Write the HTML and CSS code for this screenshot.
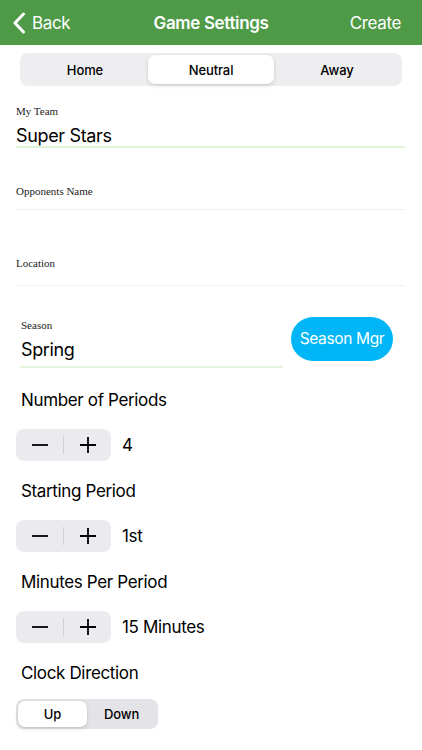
FILE: index.html
```html
<!DOCTYPE html>
<html>
<head>
<meta charset="utf-8">
<link rel="stylesheet" href="styles.css">
</head>
<body>
<header class="nav">
  <div class="nav-back">
    <svg width="14" height="22" viewBox="0 0 14 22"><path d="M11.5 2 L3 11 L11.5 20" fill="none" stroke="#fff" stroke-width="3" stroke-linecap="round" stroke-linejoin="round"/></svg>
    <span>Back</span>
  </div>
  <div class="nav-title">Game Settings</div>
  <div class="nav-action">Create</div>
</header>

<div class="seg-wrap">
  <div class="seg seg-wide">
    <div class="seg-item">Home</div>
    <div class="seg-item selected">Neutral</div>
    <div class="seg-item">Away</div>
  </div>
</div>

<div class="field f-team">
  <div class="f-label">My Team</div>
  <div class="f-value">Super Stars</div>
  <div class="f-line strong"></div>
</div>

<div class="field f-opp">
  <div class="f-label">Opponents Name</div>
  <div class="f-value empty"></div>
  <div class="f-line"></div>
</div>

<div class="field f-loc">
  <div class="f-label">Location</div>
  <div class="f-value empty"></div>
  <div class="f-line"></div>
</div>

<div class="season-row">
  <div class="field season">
    <div class="f-label">Season</div>
    <div class="f-value">Spring</div>
    <div class="f-line"></div>
  </div>
  <div class="season-btn">Season Mgr</div>
</div>

<div class="setting first">
  <div class="s-title">Number of Periods</div>
  <div class="s-row">
    <div class="stepper">
      <div class="st-btn"><svg width="16" height="16" viewBox="0 0 16 16"><path d="M0 8 H16" stroke="#000" stroke-width="1.8"/></svg></div>
      <div class="st-div"></div>
      <div class="st-btn"><svg width="16" height="16" viewBox="0 0 16 16"><path d="M0 8 H16 M8 0 V16" stroke="#000" stroke-width="1.8"/></svg></div>
    </div>
    <div class="s-value">4</div>
  </div>
</div>

<div class="setting">
  <div class="s-title">Starting Period</div>
  <div class="s-row">
    <div class="stepper">
      <div class="st-btn"><svg width="16" height="16" viewBox="0 0 16 16"><path d="M0 8 H16" stroke="#000" stroke-width="1.8"/></svg></div>
      <div class="st-div"></div>
      <div class="st-btn"><svg width="16" height="16" viewBox="0 0 16 16"><path d="M0 8 H16 M8 0 V16" stroke="#000" stroke-width="1.8"/></svg></div>
    </div>
    <div class="s-value">1st</div>
  </div>
</div>

<div class="setting">
  <div class="s-title">Minutes Per Period</div>
  <div class="s-row">
    <div class="stepper">
      <div class="st-btn"><svg width="16" height="16" viewBox="0 0 16 16"><path d="M0 8 H16" stroke="#000" stroke-width="1.8"/></svg></div>
      <div class="st-div"></div>
      <div class="st-btn"><svg width="16" height="16" viewBox="0 0 16 16"><path d="M0 8 H16 M8 0 V16" stroke="#000" stroke-width="1.8"/></svg></div>
    </div>
    <div class="s-value">15 Minutes</div>
  </div>
</div>

<div class="setting">
  <div class="s-title">Clock Direction</div>
  <div class="s-row clock">
    <div class="seg seg-small">
      <div class="seg-item selected">Up</div>
      <div class="seg-item">Down</div>
    </div>
  </div>
</div>
</body>
</html>
```

FILE: styles.css
```css
* { box-sizing: border-box; }
html, body { margin: 0; padding: 0; }
body {
  width: 422px;
  height: 750px;
  overflow: hidden;
  background: #fff;
  font-family: "Inter", "Liberation Sans", sans-serif;
  color: #000;
  letter-spacing: -0.35px;
}
.nav {
  height: 45px;
  background: #4f9a47;
  color: #fff;
  display: flex;
  align-items: center;
  justify-content: space-between;
  padding: 0 21px 0 12px;
  position: relative;
}
.nav-back {
  display: flex;
  align-items: center;
  gap: 6px;
  font-size: 17px;
}
.nav-title {
  position: absolute;
  left: 0;
  right: 0;
  text-align: center;
  font-size: 17px;
  font-weight: 600;
  pointer-events: none;
}
.nav-action { font-size: 17px; }

.seg-wrap { padding: 8px 20px 0 20px; }
.seg {
  display: flex;
  background: #eeeef0;
  border-radius: 8px;
  padding: 2px;
}
.seg-wide { height: 33px; }
.seg-item {
  flex: 1;
  display: flex;
  align-items: center;
  justify-content: center;
  font-size: 13px;
  font-weight: 500;
  letter-spacing: -0.1px;
  border-radius: 7px;
}
.seg-item.selected {
  background: #fff;
  box-shadow: 0 2px 4px rgba(0,0,0,0.12), 0 0 0 0.5px rgba(0,0,0,0.04);
}

.field { margin: 0 17px 0 16px; }
.f-label {
  font-family: "Liberation Serif", "Times New Roman", serif;
  font-size: 11px;
  color: #222;
  line-height: 13px;
  letter-spacing: 0;
}
.f-value {
  font-size: 18px;
  line-height: 24px;
  height: 24px;
  margin-top: 5px;
}
.f-line {
  height: 1px;
  background: #eaf7e6;
}
.f-line.strong { height: 2px; background: #dcf3d6; }
.f-team { margin-top: 19px; }
.f-team .f-value { margin-top: 6px; height: 22px; }
.f-opp { margin-top: 37px; }
.f-opp .f-value { height: 11px; margin-top: 0; }
.f-loc { margin-top: 47px; }
.f-loc .f-value { height: 15px; margin-top: 0; }

.season-row {
  display: flex;
  align-items: center;
  margin-top: 33px;
  padding: 0 29px 0 20px;
}
.season-row .field { margin: 0; flex: 0 0 263px; }
.season .f-label { margin-left: 1px; }
.season .f-value { margin-top: 4px; margin-left: 1px; height: 30px; line-height: 28px; }
.season .f-line { background: #e3f5dd; height: 2px; }
.season-btn {
  margin-left: auto;
  background: #00b6f6;
  color: #fff;
  font-size: 15.5px;
  height: 44px;
  width: 102px;
  border-radius: 22px;
  display: flex;
  align-items: center;
  justify-content: center;
  margin-top: -10px;
}

.setting { padding: 0 16px; }
.s-title {
  font-size: 17px;
  line-height: 22px;
  padding-left: 5px;
  margin-top: 19px;
}
.setting.first .s-title { margin-top: 21px; }
.s-row {
  display: flex;
  align-items: center;
  margin-top: 18px;
  height: 32px;
}
.s-row.clock { margin-top: 15px; height: 30px; }
.stepper {
  display: flex;
  align-items: center;
  width: 95px;
  height: 32px;
  background: #ebebef;
  border-radius: 8px;
}
.st-btn {
  flex: 1;
  display: flex;
  align-items: center;
  justify-content: center;
  height: 100%;
}
.st-div {
  width: 1px;
  height: 18px;
  background: #d2d2d6;
}
.s-value {
  font-size: 17px;
  margin-left: 11px;
}
.seg-small {
  width: 142px;
  height: 30px;
  background: #e4e4e8;
}
.seg-small .seg-item { font-size: 13px; }
```
